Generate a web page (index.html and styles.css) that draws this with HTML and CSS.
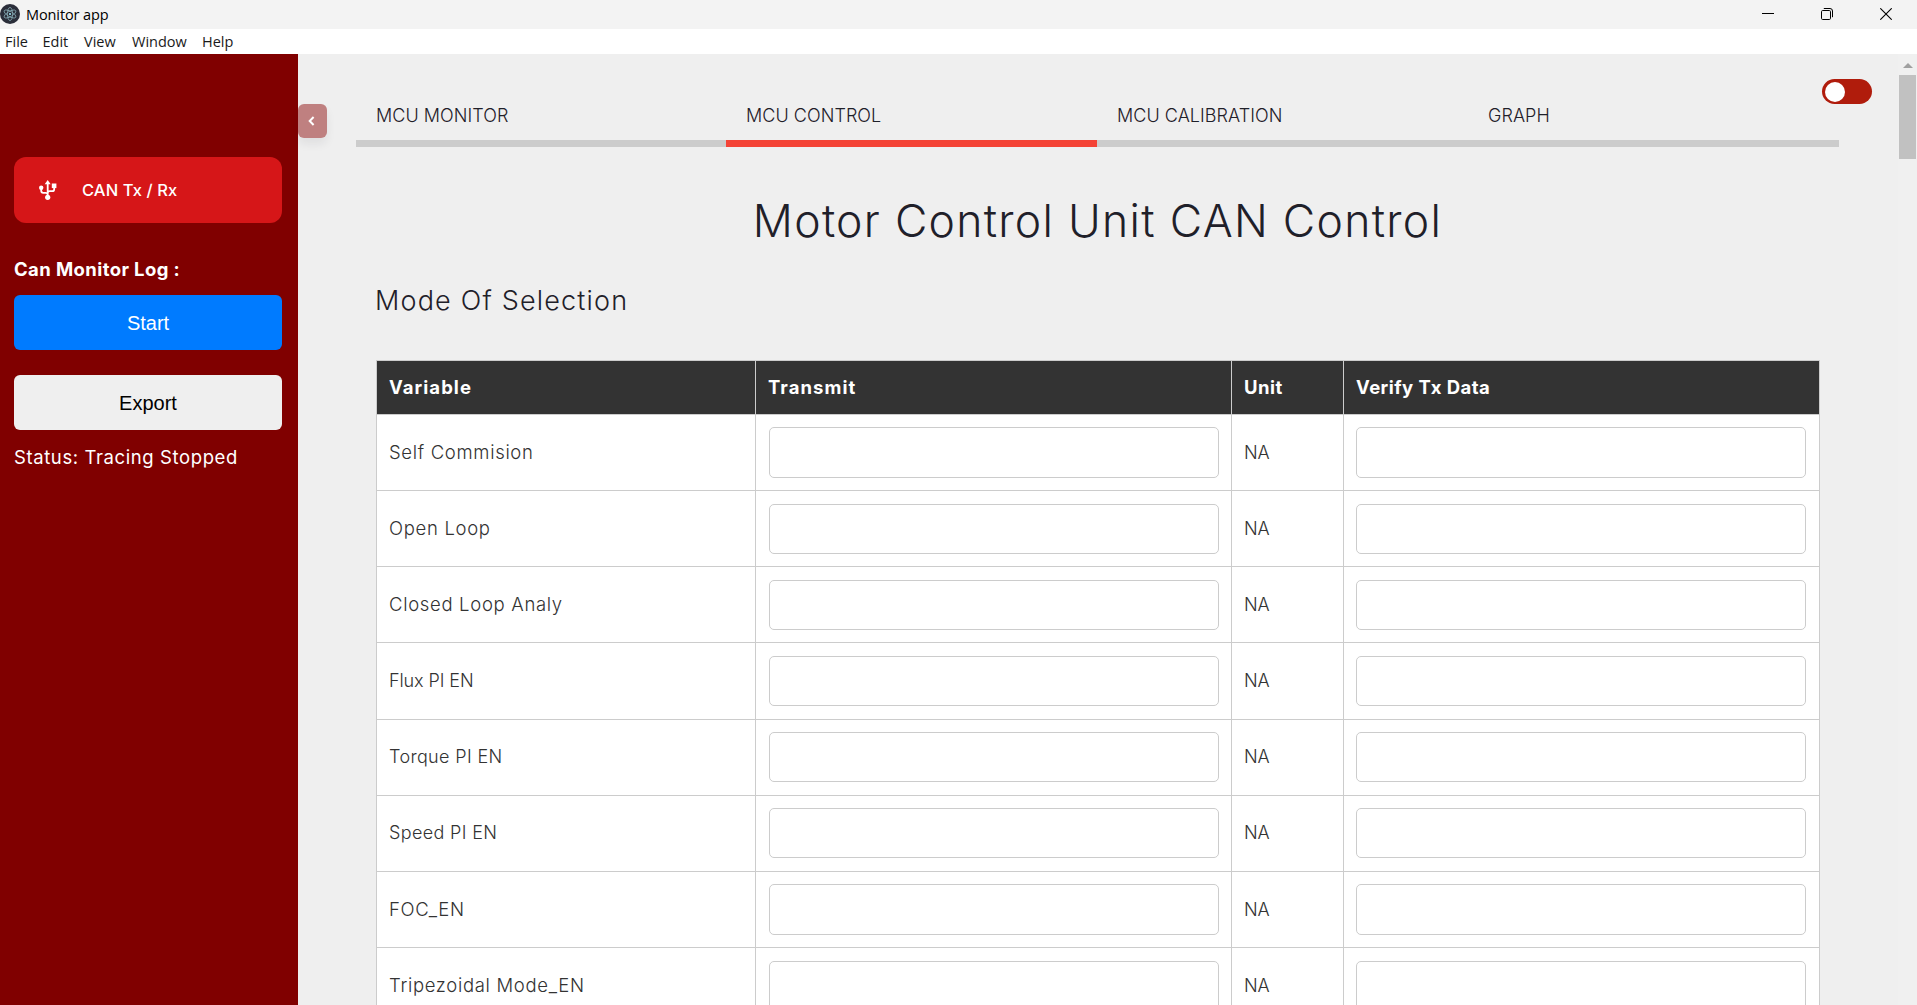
FILE: index.html
```html
<!DOCTYPE html>
<html lang="en">
<head>
<meta charset="utf-8">
<title>Monitor app</title>
<link rel="stylesheet" href="styles.css">
</head>
<body>
<header class="titlebar">
  <svg class="app-icon" width="20" height="20" viewBox="0 0 20 20" fill="none">
    <circle cx="10" cy="10" r="10" fill="#2b2e3a"/>
    <g stroke="#86a9b3" stroke-width=".8">
      <ellipse cx="10" cy="10" rx="6.6" ry="2.6" transform="rotate(30 10 10)"/>
      <ellipse cx="10" cy="10" rx="6.6" ry="2.6" transform="rotate(90 10 10)"/>
      <ellipse cx="10" cy="10" rx="6.6" ry="2.6" transform="rotate(150 10 10)"/>
    </g>
    <circle cx="10" cy="10" r="1" fill="#9feaf9"/>
  </svg>
  <span class="app-name">Monitor app</span>
  <div class="window-controls">
    <svg width="12" height="12" viewBox="0 0 12 12" stroke="#000"><path d="M0 5.5h12"/></svg>
    <svg width="12" height="12" viewBox="0 0 12 12" fill="none" stroke="#000"><rect x=".5" y="2.5" width="9" height="9" rx="1.2"/><path d="M2.8 .5H9a2.5 2.5 0 0 1 2.5 2.5v6.2"/></svg>
    <svg width="12" height="12" viewBox="0 0 12 12" stroke="#000" stroke-width="1.1"><path d="M.3.3l11.4 11.4M11.7.3L.3 11.7"/></svg>
  </div>
</header>
<nav class="menubar"><span class="m-file">File</span><span class="m-edit">Edit</span><span class="m-view">View</span><span class="m-window">Window</span><span>Help</span></nav>
<div class="app">
  <aside class="sidebar">
    <a class="nav-link">
      <svg width="18" height="20" viewBox="0 0 18 20" fill="none" stroke="#fff" stroke-width="1.8">
        <path d="M8.7 3v14M2.2 8.5v2.3c0 1.2.8 2 2 2h2.500c1.200 0 2 .8 2 2M15.200 7v2.200c0 1.200-.8 2-2 2h-2.500c-1.200 0-2 .8-2 2"/>
        <path d="M8.700 0l3 4.200h-6z" fill="#fff" stroke="none"/>
        <circle cx="8.700" cy="17.300" r="2.600" fill="#fff" stroke="none"/>
        <circle cx="2.200" cy="7.800" r="2.200" fill="#fff" stroke="none"/>
        <path d="M12.800 3.500h4.600v4.600h-4.600z" fill="#fff" stroke="none"/>
      </svg>
      <span>CAN Tx / Rx</span>
    </a>
    <div class="log-title">Can Monitor Log :</div>
    <button class="btn start">Start</button>
    <button class="btn export">Export</button>
    <div class="status">Status: Tracing Stopped</div>
    <button class="collapse"><svg width="7" height="10" viewBox="0 0 7 10" fill="none" stroke="#fff" stroke-width="2"><path d="M5.600 1L1.700 5l3.900 4"/></svg></button>
  </aside>
  <main class="content">
    <div class="tabs">
      <div class="tab">MCU MONITOR</div>
      <div class="tab active">MCU CONTROL</div>
      <div class="tab">MCU CALIBRATION</div>
      <div class="tab">GRAPH</div>
    </div>
    <h1>Motor Control Unit CAN Control</h1>
    <h2>Mode Of Selection</h2>
    <table>
      <colgroup><col class="c-name"><col class="c-field"><col class="c-unit"><col class="c-field"></colgroup>
      <thead><tr><th>Variable</th><th>Transmit</th><th class="snug">Unit</th><th class="snug">Verify Tx Data</th></tr></thead>
      <tbody>
        <tr><td>Self Commision</td><td class="f"><input></td><td class="u">NA</td><td class="f v"><input></td></tr>
        <tr><td>Open Loop</td><td class="f"><input></td><td class="u">NA</td><td class="f v"><input></td></tr>
        <tr><td>Closed Loop Analy</td><td class="f"><input></td><td class="u">NA</td><td class="f v"><input></td></tr>
        <tr><td class="u">Flux PI EN</td><td class="f"><input></td><td class="u">NA</td><td class="f v"><input></td></tr>
        <tr><td class="half">Torque PI EN</td><td class="f"><input></td><td class="u">NA</td><td class="f v"><input></td></tr>
        <tr><td class="half">Speed PI EN</td><td class="f"><input></td><td class="u">NA</td><td class="f v"><input></td></tr>
        <tr><td>FOC_EN</td><td class="f"><input></td><td class="u">NA</td><td class="f v"><input></td></tr>
        <tr><td>Tripezoidal Mode_EN</td><td class="f"><input></td><td class="u">NA</td><td class="f v"><input></td></tr>
      </tbody>
    </table>
    <label class="switch"><span class="knob"></span></label>
  </main>
  <div class="scrollbar"><div class="arrow"></div><div class="thumb"></div></div>
</div>
</body>
</html>
```
FILE: styles.css
```css
* { box-sizing: border-box; }
html, body { height: 100%; margin: 0; overflow: hidden; }
body {
  display: flex;
  flex-direction: column;
  background: #efefef;
  color: #1f2029;
  font-family: Inter, sans-serif;
  font-weight: 340;
  font-size: 18px;
}
svg { display: block; flex: none; }

/* Window frame */
.titlebar {
  flex: none;
  height: 29px;
  display: flex;
  align-items: center;
  background: #f3f3f3;
  color: #000;
  font: 400 14.5px "Open Sans", sans-serif;
}
.app-icon { margin-top: -1px; }
.app-name { margin-left: 6px; letter-spacing: -0.1px; }
.window-controls { margin: -2px 25px 0 auto; display: flex; gap: 47px; }
.menubar {
  flex: none;
  height: 25px;
  display: flex;
  align-items: center;
  padding-left: 5px;
  background: #fff;
  color: #1a1a1a;
  font: 400 14.5px/25px "Open Sans", sans-serif;
}
.m-file { width: 37.500px; }
.m-edit { width: 41.500px; }
.m-view { width: 48px; }
.m-window { width: 70px; }

.app { flex: 1; min-height: 0; display: flex; }

/* Sidebar */
.sidebar {
  position: relative;
  flex: none;
  width: 298px;
  padding: 103px 16px 0 14px;
  display: flex;
  flex-direction: column;
  background: #800000;
  color: #fff;
}
.nav-link {
  height: 66px;
  padding-left: 25px;
  display: flex;
  align-items: center;
  gap: 25px;
  border-radius: 12px;
  background: #d61618;
  font-size: 16.500px;
  font-weight: 500;
  letter-spacing: 0.1px;
}
.log-title { margin-top: 31px; line-height: 30px; font-size: 18.500px; font-weight: 700; letter-spacing: 0.4px; }
.btn {
  height: 55px;
  border: 0;
  border-radius: 6px;
  font: 20px "Liberation Sans", sans-serif;
}
.start { margin-top: 11px; padding-top: 2px; background: #007bff; color: #fff; }
.export { margin-top: 25px; padding-top: 2px; background: #efefef; color: #000; }
.status { margin-top: 12px; line-height: 30px; font-size: 18.500px; font-weight: 400; letter-spacing: 0.6px; }
.collapse {
  position: absolute;
  left: 298px;
  top: 50px;
  width: 29px;
  height: 34px;
  padding: 0 3px 0 0;
  display: flex;
  align-items: center;
  justify-content: center;
  border: 0;
  border-radius: 6px;
  background: #bf8080;
  box-shadow: 0 6px 10px rgba(31, 32, 41, 0.07);
}

/* Main column */
.content { position: relative; flex: 1; min-width: 0; padding: 38px 59px 0 58px; overflow: hidden; }
.tabs { display: grid; grid-template-columns: 370px 371px 371px 1fr; }
.tab {
  height: 55px;
  padding-left: 20px;
  border-bottom: 7px solid #ccc;
  line-height: 48px;
  letter-spacing: 0.05px;
}
.tab.active { border-color: #f44336; }
h1 {
  margin: 39px 0 0;
  text-align: center;
  font-size: 44.500px;
  font-weight: 340;
  line-height: 70px;
  letter-spacing: 1.3px;
}
h2 {
  margin: 25px 0 0 19px;
  font-size: 27px;
  font-weight: 340;
  line-height: 40px;
  letter-spacing: 1.18px;
}
table {
  width: 1444px;
  margin: 39px 0 0 20px;
  table-layout: fixed;
  border-collapse: separate;
  border-spacing: 0;
  border: 1px solid #ccc;
  border-width: 1px 0 0 1px;
  background: #fff;
  color: #333;
}
.c-name { width: 379px; }
.c-field { width: 476px; }
.c-unit { width: 112px; }
th, td {
  padding: 0 12px 1px 12px;
  border: 1px solid #ccc;
  border-width: 0 1px 1px 0;
  text-align: left;
  font-size: 18.500px;
  letter-spacing: 0.68px;
}
th { height: 54px; background: #333; color: #fff; font-weight: 700; letter-spacing: 1.05px; }
.snug { letter-spacing: 0.45px; }
td { height: 76.170px; }
td.f { padding: 0 12px 0 13px; }
td.f.v { padding: 0 13px 0 12px; }
td.u { font-size: 18px; letter-spacing: -0.1px; }
td.half { font-size: 18px; letter-spacing: 0.35px; }
input {
  display: block;
  width: 100%;
  height: 50.200px;
  border: 1px solid #ccc;
  border-radius: 5px;
  background: #fff;
}
.switch {
  position: absolute;
  left: 1524px;
  top: 25px;
  width: 50px;
  height: 25px;
  padding: 3px;
  border-radius: 13px;
  background: #b01c0c;
}
.knob { display: block; width: 20px; height: 20px; border-radius: 50%; background: #fff; }

.scrollbar {
  flex: none;
  width: 19px;
  padding: 9px 1px 0;
  display: flex;
  flex-direction: column;
  align-items: center;
  background: #f0f0f0;
}
.arrow { border: 5px solid transparent; border-top: 0; border-bottom-color: #a0a0a0; }
.thumb { width: 17px; height: 84px; margin-top: 7px; background: #c1c1c1; }
```
